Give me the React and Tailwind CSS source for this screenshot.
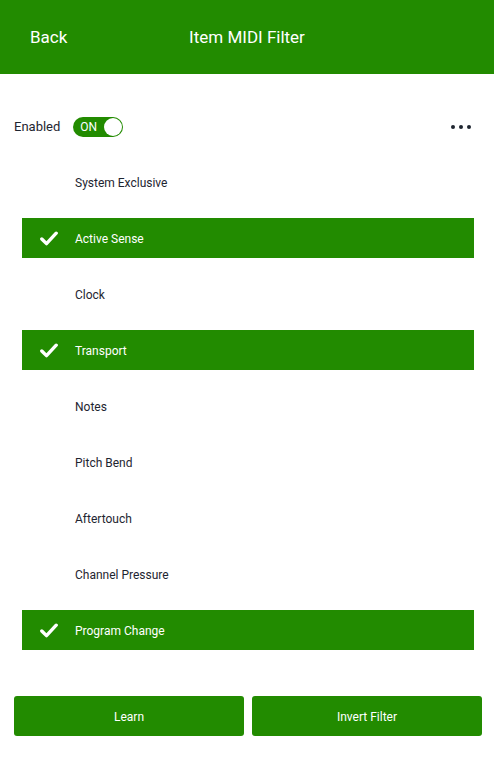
import { useState } from 'react'

const items = [
  { name: 'System Exclusive', on: false },
  { name: 'Active Sense', on: true },
  { name: 'Clock', on: false },
  { name: 'Transport', on: true },
  { name: 'Notes', on: false },
  { name: 'Pitch Bend', on: false },
  { name: 'Aftertouch', on: false },
  { name: 'Channel Pressure', on: false },
  { name: 'Program Change', on: true },
]

function Check() {
  return (
    <svg width="18" height="15" viewBox="0 0 18 15" className="block">
      <path d="M1.8 8 L6.5 12.6 L16.2 2.2" fill="none" stroke="white" strokeWidth="3.4" strokeLinecap="round" strokeLinejoin="round" />
    </svg>
  )
}

export default function App() {
  const [enabled, setEnabled] = useState(true)
  const [filters, setFilters] = useState(items)

  const toggle = (i) => setFilters(filters.map((f, j) => (j === i ? { ...f, on: !f.on } : f)))

  return (
    <div className="w-[494px] h-[767px] bg-white font-['Roboto',sans-serif] text-[#1e2530]">
      {/* Header */}
      <div className="h-[74px] bg-[#228b00] flex items-center relative pt-[2px]">
        <button className="pl-[30px] text-white text-[17px]">Back</button>
        <h1 className="absolute left-0 right-0 text-center text-white text-[17px] pointer-events-none">Item MIDI Filter</h1>
      </div>

      {/* Enabled row */}
      <div className="h-[40px] mt-[32px] flex items-center px-[14px] pt-px">
        <span className="text-[13px]">Enabled</span>
        <button
          onClick={() => setEnabled(!enabled)}
          className="ml-[13px] w-[50px] h-[20px] rounded-full bg-[#228b00] flex items-center justify-between pl-[7px] pr-[1px]"
        >
          <span className="text-white text-[12px] leading-none">ON</span>
          <span className="w-[18px] h-[18px] rounded-full bg-white" />
        </button>
        <div className="ml-auto mr-[9px] flex gap-[4px]">
          <span className="w-[4px] h-[4px] rounded-full bg-[#1e2530]" />
          <span className="w-[4px] h-[4px] rounded-full bg-[#1e2530]" />
          <span className="w-[4px] h-[4px] rounded-full bg-[#1e2530]" />
        </div>
      </div>

      {/* Filter list */}
      <div className="mt-[16px] pl-[22px] pr-[20px] flex flex-col gap-[16px]">
        {filters.map((f, i) => (
          <div
            key={f.name}
            onClick={() => toggle(i)}
            className={`h-[40px] flex items-center text-[12px] pt-px ${f.on ? 'bg-[#228b00] text-white' : ''}`}
          >
            <div className="w-[53px] flex justify-end pr-[17px]">{f.on && <Check />}</div>
            <span>{f.name}</span>
          </div>
        ))}
      </div>

      {/* Buttons */}
      <div className="mt-[46px] pl-[14px] pr-[12px] grid grid-cols-2 gap-[8px]">
        <button className="h-[40px] rounded-[3px] bg-[#228b00] text-white text-[12px] pt-px">Learn</button>
        <button className="h-[40px] rounded-[3px] bg-[#228b00] text-white text-[12px] pt-px">Invert Filter</button>
      </div>
    </div>
  )
}
